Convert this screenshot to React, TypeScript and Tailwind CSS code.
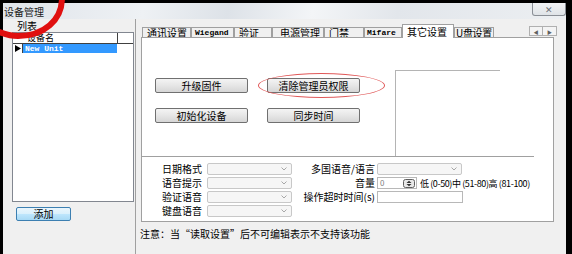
import React from "react";

const tabs = [
  { label: "通讯设置", w: "w-[49px]", pl: "pl-[4px]", mono: false },
  { label: "Wiegand", w: "w-[43px]", pl: "pl-[3px]", mono: true },
  { label: "验证", w: "w-[38px]", pl: "pl-[4px]", mono: false },
  { label: "电源管理", w: "w-[52px]", pl: "pl-[7px]", mono: false },
  { label: "门禁", w: "w-[40px]", pl: "pl-[4px]", mono: false },
  { label: "Mifare", w: "w-[38px]", pl: "pl-[2px]", mono: true },
];

const Chevron = () => (
  <svg width="6" height="4" viewBox="0 0 6 4" className="mr-[4px]">
    <path d="M0.5 0.5 L3 3 L5.5 0.5" fill="none" stroke="#a8a8a8" strokeWidth="1" />
  </svg>
);

const Combo = () => (
  <div className="flex h-[12px] w-[85px] items-center justify-end rounded-[2px] border border-[#c8c8c8] bg-[#f6f6f6]">
    <Chevron />
  </div>
);

const Btn = ({ children }: { children: React.ReactNode }) => (
  <div className="flex h-[15px] w-[93px] items-center justify-center rounded-[2px] border border-[#707070] bg-[linear-gradient(#f4f4f4,#e6e6e6_50%,#d6d6d6)]">
    {children}
  </div>
);

export default function App() {
  return (
    <div className="relative h-[254px] w-[572px] overflow-hidden bg-black pl-[3px] pr-[6px] pt-[3px] font-['Noto_Sans_CJK_SC',sans-serif] text-[10px] leading-none text-black">
      <div className="flex h-full flex-col bg-[#f0f0f0]">
        {/* ===== Title bar ===== */}
        <div className="flex h-[16px] items-start justify-between bg-[linear-gradient(100deg,#dfe4ea_0%,#eef1f4_25%,#dde2e8_40%,#f3f5f7_55%,#e2e6eb_70%,#eceff2_100%)]">
          <span className="pl-[1px] pt-[4px] text-[#1a1a1a]">设备管理</span>
          <div className="flex h-[13px] w-[34px] items-center justify-center rounded-b-[3px] border border-t-0 border-[#8a8f96] bg-[linear-gradient(#f2f4f6,#dfe3e7)] text-[9px] text-[#6b7077]">
            ✕
          </div>
        </div>

        {/* ===== Body ===== */}
        <div className="flex flex-1">
          {/* Left: list */}
          <div className="flex w-[133px] flex-col border-r border-[#a0a0a0]">
            <div className="h-[13px] pl-[14px] pt-[2px]">
              <span className="leading-[10px]">列表</span>
            </div>
            <div className="ml-[9px] h-[170px] w-[122px] border border-[#828790] bg-white">
              <div className="flex h-[11px] border-b border-[#404040]">
                <div className="w-[10px]" />
                <div className="w-[95px] border-r border-[#404040] pl-[4px] text-[9px] leading-[10px]">设备名</div>
              </div>
              <div className="flex h-[9px]">
                <div className="flex w-[10px] items-center justify-center border-r border-[#404040]">
                  <svg width="6" height="7" viewBox="0 0 6 7">
                    <path d="M0 0 L6 3.5 L0 7 Z" fill="#000" />
                  </svg>
                </div>
                <div className="flex w-[94px] items-center bg-[#3399ff] pl-[2px] font-['Liberation_Mono',monospace] text-[8px] font-bold text-white">
                  New Unit
                </div>
              </div>
            </div>
            <div className="ml-[13px] mt-[5px] flex h-[14px] w-[55px] items-center justify-center rounded-[2px] border border-[#3c7fb1] bg-[linear-gradient(#eaf6fd,#d9f0fc_50%,#bee6fd_51%,#a7d9f5)]">
              添加
            </div>
          </div>

          {/* Right: tabs */}
          <div className="flex flex-1 flex-col">
            <div className="ml-[6px] mt-[5px] flex h-[13px] items-end whitespace-nowrap">
              {tabs.map((t) => (
                <div
                  key={t.label}
                  className={`flex h-[10px] items-center border border-b-0 border-[#a0a0a0] bg-[#f0f0f0] leading-[9px] ${t.w} ${t.pl} ${
                    t.mono ? "font-['Liberation_Mono',monospace] text-[8px] font-bold" : ""
                  }`}
                >
                  {t.label}
                </div>
              ))}
              <div className="relative z-10 -mb-[1px] flex h-[14px] w-[52px] items-center border border-b-0 border-[#a0a0a0] bg-white pl-[4px]">
                其它设置
              </div>
              <div className="flex h-[10px] w-[40px] items-center border border-b-0 border-[#a0a0a0] bg-[#f0f0f0] pl-[1px] leading-[9px] tracking-[-0.3px]">
                U盘设置
              </div>
              <div className="mb-[1px] ml-auto mr-[9px] flex h-[10px]">
                <div className="flex w-[14px] items-center justify-center border border-[#b0b0b0] bg-[#f4f4f4] text-[5px] text-[#606060]">◀</div>
                <div className="flex w-[14px] items-center justify-center border border-l-0 border-[#b0b0b0] bg-[#f4f4f4] text-[5px] text-[#606060]">▶</div>
              </div>
            </div>

            {/* Tab page */}
            <div className="ml-[5px] flex h-[185px] w-[413px] flex-col border border-[#a0a0a0] bg-white">
              <div className="flex h-[119px] w-[392px] border-b border-[#a0a0a0]">
                <div className="grid grid-cols-[93px_93px] gap-x-[19px] gap-y-[15px] self-start pl-[13px] pt-[40px]">
                  <Btn>升级固件</Btn>
                  <Btn>清除管理员权限</Btn>
                  <Btn>初始化设备</Btn>
                  <Btn>同步时间</Btn>
                </div>
                <div className="ml-[35px] mt-[32px] w-[105px] border-l border-t border-[#b4b4b4]" />
              </div>

              <div className="flex flex-col gap-[2px] pt-[6px]">
                <div className="flex h-[12px] items-center">
                  <span className="w-[60px] text-right">日期格式</span>
                  <div className="ml-[5px]"><Combo /></div>
                  <span className="w-[83px] text-right">多国语音/语言</span>
                  <div className="ml-[2px]"><Combo /></div>
                </div>
                <div className="flex h-[12px] items-center">
                  <span className="w-[60px] text-right">语音提示</span>
                  <div className="ml-[5px]"><Combo /></div>
                  <span className="w-[83px] text-right">音量</span>
                  <div className="ml-[2px] flex h-[12px] w-[40px] items-center justify-between border border-[#b8b8b8] pl-[2px] pr-[1px] text-[8px] text-[#808080]">
                    0
                    <svg width="12" height="9" viewBox="0 0 12 9">
                      <rect x="0.5" y="0.5" width="11" height="8" rx="2" fill="#e8e8e8" stroke="#606060" />
                      <path d="M3.5 4 L6 1.8 L8.5 4 Z M3.5 5 L6 7.2 L8.5 5 Z" fill="#303030" />
                    </svg>
                  </div>
                  <span className="ml-[3px] whitespace-nowrap text-[9px] tracking-[-0.4px]">
                    低 (0-50)中 (51-80)高 (81-100)
                  </span>
                </div>
                <div className="flex h-[12px] items-center">
                  <span className="w-[60px] text-right">验证语音</span>
                  <div className="ml-[5px]"><Combo /></div>
                  <span className="w-[83px] text-right">操作超时时间(s)</span>
                  <div className="ml-[2px] h-[12px] w-[86px] border border-[#b8b8b8] bg-white" />
                </div>
                <div className="flex h-[12px] items-center">
                  <span className="w-[60px] text-right">键盘语音</span>
                  <div className="ml-[5px]"><Combo /></div>
                </div>
              </div>
            </div>

            <span className="ml-[4px] mt-[7px]">注意：当“读取设置”后不可编辑表示不支持该功能</span>
          </div>
        </div>
      </div>

      {/* ===== Red annotations ===== */}
      <div className="absolute left-[258px] top-[73px] h-[25px] w-[127px] rounded-[50%] border border-[#e05858]" />
      <svg className="absolute left-0 top-0" width="80" height="45" viewBox="0 0 80 45">
        <path d="M62 -2 C62 20 44 36 18 36 C10 36 4 34 -3 31" fill="none" stroke="#e01010" strokeWidth="6" strokeLinecap="round" />
      </svg>
    </div>
  );
}
